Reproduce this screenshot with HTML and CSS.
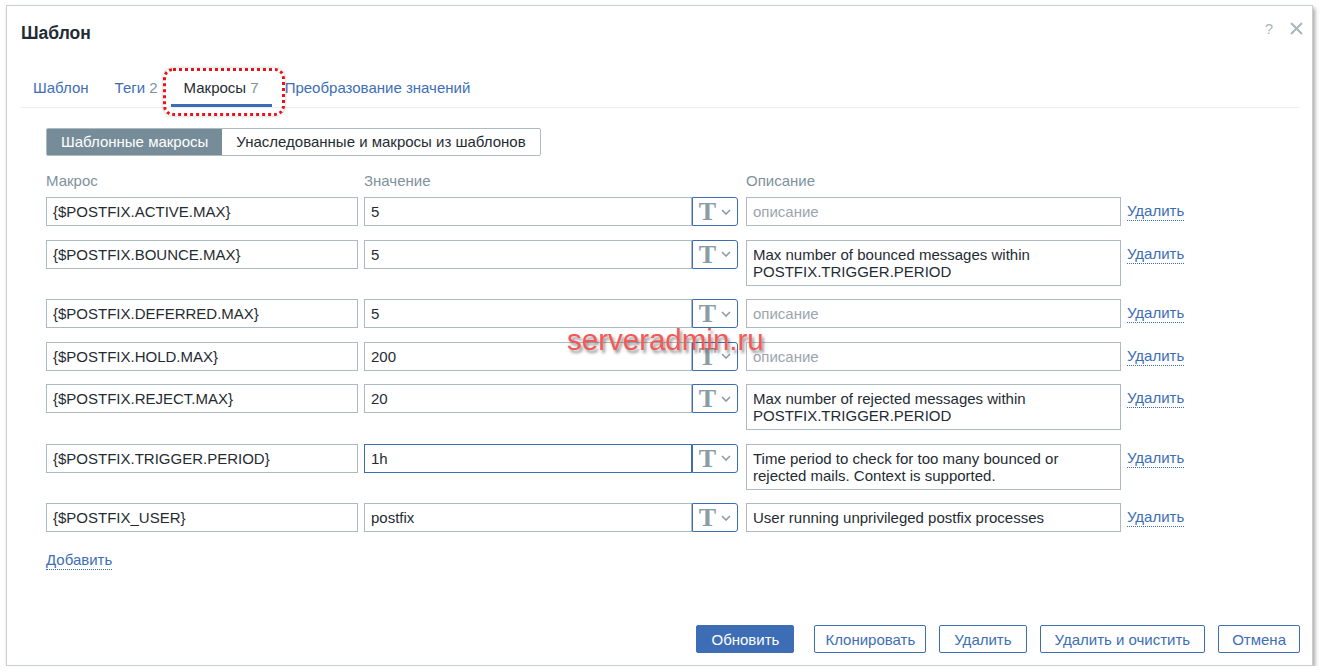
FILE: index.html
```html
<!DOCTYPE html>
<html lang="ru">
<head>
  <meta charset="UTF-8" />
  <title>Шаблон</title>
  <link rel="stylesheet" href="styles.css">
</head>
<body>
  <div class="dialog">
    <div class="dialog-head">
      <h2>Шаблон</h2>
      <div class="head-controls">
        <span class="help">?</span>
        <svg class="close" width="13" height="13" viewBox="0 0 13 13"><path d="M1 1L12 12M12 1L1 12" stroke="#a9b6bd" stroke-width="2"/></svg>
      </div>
    </div>

    <div class="tabs">
      <a class="tab">Шаблон</a>
      <a class="tab">Теги <span class="count">2</span></a>
      <a class="tab active">Макросы <span class="count">7</span></a>
      <a class="tab">Преобразование значений</a>
      <span class="mark"></span>
    </div>

    <div class="content">
      <div class="segmented">
        <span class="seg on">Шаблонные макросы</span>
        <span class="seg">Унаследованные и макросы из шаблонов</span>
      </div>

      <div class="macro-grid head">
        <span>Макрос</span>
        <span>Значение</span>
        <span>Описание</span>
      </div>

      <div class="macro-grid rows">
        <input class="field" value="{$POSTFIX.ACTIVE.MAX}">
        <div class="value"><input class="field" value="5"><span class="type-btn">T<svg width="10" height="6" viewBox="0 0 10 6"><path d="M1 1L5 5L9 1" stroke="#8a9ca6" stroke-width="1.6" fill="none"/></svg></span></div>
        <input class="field" placeholder="описание">
        <a class="link">Удалить</a>

        <input class="field" value="{$POSTFIX.BOUNCE.MAX}">
        <div class="value"><input class="field" value="5"><span class="type-btn">T<svg width="10" height="6" viewBox="0 0 10 6"><path d="M1 1L5 5L9 1" stroke="#8a9ca6" stroke-width="1.6" fill="none"/></svg></span></div>
        <textarea class="field tall">Max number of bounced messages within POSTFIX.TRIGGER.PERIOD</textarea>
        <a class="link">Удалить</a>

        <input class="field" value="{$POSTFIX.DEFERRED.MAX}">
        <div class="value"><input class="field" value="5"><span class="type-btn">T<svg width="10" height="6" viewBox="0 0 10 6"><path d="M1 1L5 5L9 1" stroke="#8a9ca6" stroke-width="1.6" fill="none"/></svg></span></div>
        <input class="field" placeholder="описание">
        <a class="link">Удалить</a>

        <input class="field" value="{$POSTFIX.HOLD.MAX}">
        <div class="value"><input class="field" value="200"><span class="type-btn">T<svg width="10" height="6" viewBox="0 0 10 6"><path d="M1 1L5 5L9 1" stroke="#8a9ca6" stroke-width="1.6" fill="none"/></svg></span></div>
        <input class="field" placeholder="описание">
        <a class="link">Удалить</a>

        <input class="field" value="{$POSTFIX.REJECT.MAX}">
        <div class="value"><input class="field" value="20"><span class="type-btn">T<svg width="10" height="6" viewBox="0 0 10 6"><path d="M1 1L5 5L9 1" stroke="#8a9ca6" stroke-width="1.6" fill="none"/></svg></span></div>
        <textarea class="field tall">Max number of rejected messages within POSTFIX.TRIGGER.PERIOD</textarea>
        <a class="link">Удалить</a>

        <input class="field" value="{$POSTFIX.TRIGGER.PERIOD}">
        <div class="value"><input class="field focus" value="1h"><span class="type-btn">T<svg width="10" height="6" viewBox="0 0 10 6"><path d="M1 1L5 5L9 1" stroke="#8a9ca6" stroke-width="1.6" fill="none"/></svg></span></div>
        <textarea class="field tall">Time period to check for too many bounced or rejected mails. Context is supported.</textarea>
        <a class="link">Удалить</a>

        <input class="field" value="{$POSTFIX_USER}">
        <div class="value"><input class="field" value="postfix"><span class="type-btn">T<svg width="10" height="6" viewBox="0 0 10 6"><path d="M1 1L5 5L9 1" stroke="#8a9ca6" stroke-width="1.6" fill="none"/></svg></span></div>
        <input class="field" value="User running unprivileged postfix processes">
        <a class="link">Удалить</a>
      </div>

      <a class="link add">Добавить</a>

      <div class="watermark">serveradmin.ru</div>
    </div>

    <div class="dialog-foot">
      <button class="btn primary">Обновить</button>
      <button class="btn narrow">Клонировать</button>
      <button class="btn">Удалить</button>
      <button class="btn">Удалить и очистить</button>
      <button class="btn cancel">Отмена</button>
    </div>
  </div>
</body>
</html>
```

FILE: styles.css
```css
* {
  margin: 0;
  padding: 0;
  box-sizing: border-box;
}

body {
  background: #fff;
  font-family: "Liberation Sans", Arial, sans-serif;
  font-size: 15px;
  color: #1f2c33;
}

.dialog {
  margin: 5px 0 0 6px;
  width: 1307px;
  height: 661px;
  border: 1px solid #c9cfd3;
  background: #fff;
  box-shadow: 2px 3px 4px rgba(0, 0, 0, 0.35);
  display: flex;
  flex-direction: column;
}

.dialog-head {
  display: flex;
  justify-content: space-between;
  padding: 0 9px 0 14px;
}

.dialog-head h2 {
  margin-top: 16px;
  font-size: 17.5px;
  line-height: 22px;
  font-weight: bold;
  color: #1f2c33;
}

.head-controls {
  display: flex;
  align-items: center;
  gap: 17px;
  padding-top: 7px;
}

.help {
  color: #a9b6bd;
  font-size: 15px;
}

/* tabs */
.tabs {
  position: relative;
  display: flex;
  margin: 26px 12px 0 13px;
  border-bottom: 1px solid #ebeef0;
}

.tab {
  padding: 9px 13px 7px;
  line-height: 18px;
  color: #3d6eb5;
  border-bottom: 3px solid transparent;
  cursor: pointer;
}

.tab .count {
  color: #7d929d;
}

.tab.active {
  color: #1f2c33;
  border-bottom-color: #3d6eb5;
}

.mark {
  position: absolute;
  left: 143px;
  top: -2px;
  width: 122px;
  height: 48px;
  border: 3px dotted #e8141b;
  border-radius: 10px;
  box-shadow: 0 0 3px rgba(0, 0, 0, 0.25);
}

/* content */
.content {
  position: relative;
  padding: 20px 0 0 39px;
}

.segmented {
  display: inline-flex;
  height: 28px;
  border: 1px solid #acbbc2;
  border-radius: 2px;
}

.seg {
  padding: 0 14px;
  line-height: 26px;
  color: #1f2c33;
}

.seg.on {
  background: #768d99;
  color: #fff;
}

.macro-grid {
  display: grid;
  grid-template-columns: 312px 376px 375px auto;
  column-gap: 6px;
}

.macro-grid.head {
  margin-top: 16px;
  line-height: 18px;
  color: #7d929d;
}

.macro-grid.rows {
  margin-top: 7px;
  row-gap: 13.5px;
  align-items: start;
}

.field {
  display: block;
  width: 100%;
  height: 29px;
  padding: 0 6px;
  border: 1px solid #acbbc2;
  background: #fff;
  font-family: "Liberation Sans", Arial, sans-serif;
  font-size: 15px;
  color: #1f2c33;
  outline: none;
}

.field::placeholder {
  color: #9aa6ad;
}

.field.tall {
  height: 46px;
  padding: 5px 6px;
  line-height: 17px;
  resize: none;
  overflow: hidden;
}

.field.focus {
  border-color: #3d6eb5;
}

.value {
  display: flex;
  padding-right: 2px;
}

.value .field {
  flex: 1;
}

.type-btn {
  display: flex;
  align-items: center;
  justify-content: center;
  gap: 5px;
  width: 46px;
  height: 29px;
  border: 1px solid #3d6eb5;
  border-radius: 0 3px 3px 0;
  font-family: "Liberation Serif", "Times New Roman", serif;
  font-weight: bold;
  font-size: 26px;
  line-height: 27px;
  color: #8a9ca6;
}

.link {
  color: #3d6eb5;
  line-height: 18px;
  margin-top: 5px;
  justify-self: start;
  border-bottom: 1px dotted #3d6eb5;
  cursor: pointer;
}

.add {
  display: inline-block;
  margin-top: 19px;
}

.watermark {
  position: absolute;
  left: 560px;
  top: 215px;
  font-size: 29.5px;
  color: #f25a5a;
  text-shadow: 2px 3px 3px rgba(60, 60, 60, 0.55);
}

/* footer */
.dialog-foot {
  margin-top: auto;
  display: flex;
  justify-content: flex-end;
  gap: 13px;
  padding: 0 12px 12px;
}

.btn {
  height: 28px;
  padding: 0 14px;
  border: 1px solid #3d6eb5;
  border-radius: 2px;
  background: #fff;
  color: #3d6eb5;
  font-family: "Liberation Sans", Arial, sans-serif;
  font-size: 15px;
}

.btn.narrow {
  padding: 0 10px;
}

.btn.cancel {
  padding: 0 13px;
}

.btn.primary {
  background: #3d6eb5;
  color: #fff;
  margin-right: 7px;
}
```
